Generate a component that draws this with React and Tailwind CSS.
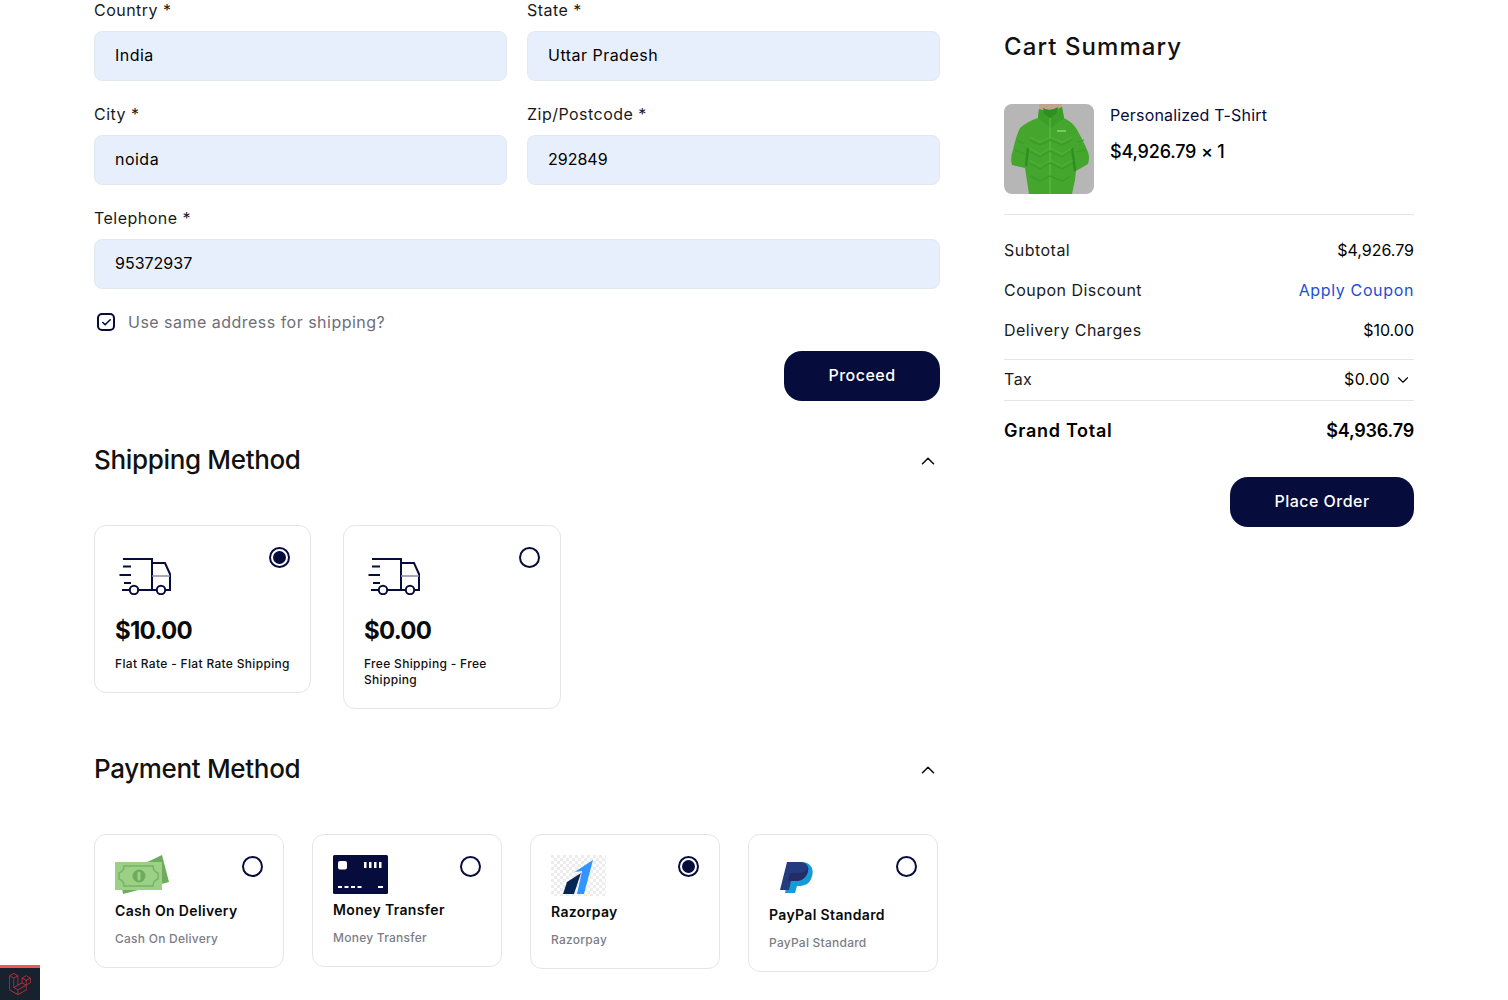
import React from 'react';
import { Check, ChevronDown, ChevronUp } from 'lucide-react';
import { FaLaravel } from 'react-icons/fa';

const Field = ({ label, value, className = '', numeric = false }) => (
  <div className={className}>
    <label className="block text-base leading-5 mb-[11px] text-[#1a1a1a]">{label} *</label>
    <input
      readOnly
      value={value}
      className={`w-full h-[50px] px-5 pb-[2px] rounded-lg border border-[#e2e8f0] bg-[#e8effc] text-base text-black outline-none ${numeric ? 'tracking-normal' : ''}`}
    />
  </div>
);

const Radio = ({ checked }) => (
  <span className="absolute top-[21px] right-[20px] w-[21px] h-[21px] rounded-full border-2 border-[#060c3b] flex items-center justify-center bg-white">
    {checked && <span className="w-[13px] h-[13px] rounded-full bg-[#060c3b]" />}
  </span>
);

const TruckIcon = () => (
  <svg width="54" height="38" viewBox="0 0 54 38" fill="none" stroke="#060c3b" strokeWidth="2" className="ml-[3px]">
    <path d="M5 2H34V33" />
    <path d="M34 6H47L52 17V33H47.5" />
    <path d="M34 19H52" stroke="#8a8ca3" strokeWidth="1.5" />
    <path d="M20.5 33H38.5" />
    <circle cx="16" cy="33" r="4.2" />
    <circle cx="43" cy="33" r="4.2" />
    <path d="M5 9.5H13M1.5 18H13M6 26H13M4 33H11" />
  </svg>
);

const CashIcon = () => (
  <svg width="55" height="40" viewBox="0 0 55 40">
    <path d="M47 0L54 27L8 39L5 20Z" fill="#6fab5c" />
    <rect x="0" y="7" width="47" height="28" fill="#9bd086" />
    <path d="M9 11H38C38 15 40 17 43 18V24C40 25 38 27 38 31H9C9 27 7 25 4 24V18C7 17 9 15 9 11Z" fill="none" stroke="#79b366" strokeWidth="1.5" />
    <circle cx="24" cy="21" r="6.5" fill="#6fab5c" />
    <rect x="22.5" y="16.5" width="3" height="9" rx="1.5" fill="#9bd086" />
  </svg>
);

const CardIcon = () => (
  <svg width="55" height="39" viewBox="0 0 55 39">
    <rect width="55" height="39" rx="1.5" fill="#060c3b" />
    <rect x="5" y="6" width="9" height="8.5" rx="2" fill="#fff" />
    <path d="M31 7h2.5v6H31zM36 7h2.5v6H36zM41 7h2.5v6H41zM46 7h2.5v6H46z" fill="#fff" />
    <path d="M5 31h4v2H5zM11.5 31h4v2h-4zM18 31h4v2h-4zM24.500 31h4v2h-4zM45 31h5v2h-5z" fill="#fff" />
  </svg>
);

const RazorpayIcon = () => (
  <svg width="55" height="41" viewBox="0 0 55 41">
    <defs>
      <pattern id="checker" width="6" height="6" patternUnits="userSpaceOnUse">
        <rect width="6" height="6" fill="#fff" />
        <rect width="3" height="3" fill="#ececec" />
        <rect x="3" y="3" width="3" height="3" fill="#ececec" />
      </pattern>
    </defs>
    <rect width="55" height="41" fill="url(#checker)" />
    <path d="M12 39L16 27L30 18L23 39Z" fill="#072654" />
    <path d="M42 5L23.500 17L31 16L26 39L33 39Z" fill="#3395ff" />
  </svg>
);

const PaypalIcon = () => (
  <svg width="55" height="44" viewBox="0 0 55 44">
    <path d="M19 19L27 7H33C37 7 41 9 43 13C44 16 44 20 42 24C40 29 35 31 30 31H28L26 38H16L17 33Z" fill="#179bd7" />
    <path d="M18 7H31C37 7 40 11 39 15C38 22 33 26 26 26H22L20 35H11Z" fill="#253b80" />
    <path d="M21 18H30C34 18 38 16 39 12C40 16 38 21 34 24C31 26 28 26 26 26H19Z" fill="#222d65" />
  </svg>
);

const JacketImage = () => (
  <svg width="90" height="90" viewBox="0 0 90 90" className="rounded-lg shrink-0">
    <defs>
      <filter id="soft">
        <feGaussianBlur stdDeviation="0.5" />
      </filter>
    </defs>
    <rect width="90" height="90" fill="#b6b6b6" />
    <g filter="url(#soft)">
      <path d="M35 0H58V6H35Z" fill="#c4a48f" />
      <path d="M34 86H60V92H34Z" fill="#1f2a1c" />
      <path
        d="M35 5Q46 9 58 3L60 14Q68 18 72 24Q78 34 84 48Q86 54 84 60L72 67L71 76L68 90H25L21 64L8 61Q6 54 9 46Q12 32 16 24Q24 17 34 14Z"
        fill="#44a62f"
      />
      <path d="M35 5Q46 11 58 3L60 14L47 24L34 14Z" fill="#3b9e28" />
      <path d="M39 4Q46 8 54 3L52 10L46 14L40 10Z" fill="#2f8f20" />
      <path d="M22 62L24 44M71 67L68 44" stroke="#2f8f20" strokeWidth="2.5" fill="none" />
      <path d="M46 14V90" stroke="#69c454" strokeWidth="0.8" />
      <path
        d="M26 36L36 41L46 36L58 41L68 36M25 47L36 53L46 47L58 53L68 47M25 59L36 65L46 59L58 65L69 59M26 72L36 77L46 72L58 77L67 72"
        stroke="#3b9c28"
        strokeWidth="1.4"
        fill="none"
      />
      <path d="M26 33L36 38L46 33L58 38L68 33M25 44L36 50L46 44L58 50L68 44M25 56L36 62L46 56L58 62L69 56" stroke="#54b53f" strokeWidth="0.8" fill="none" />
      <path d="M13 36L20 40M11 46L21 50M73 38L80 36M72 48L82 46" stroke="#3b9c28" strokeWidth="1.2" fill="none" />
      <path d="M53 27H62" stroke="#b5e6a8" strokeWidth="1" />
    </g>
  </svg>
);

const shippingMethods = [
  { price: '$10.00', name: 'Flat Rate - Flat Rate Shipping', checked: true },
  { price: '$0.00', name: 'Free Shipping - Free Shipping', checked: false },
];

const paymentMethods = [
  { name: 'Cash On Delivery', icon: <CashIcon />, h: 'h-[40px]', checked: false },
  { name: 'Money Transfer', icon: <CardIcon />, h: 'h-[39px]', checked: false },
  { name: 'Razorpay', icon: <RazorpayIcon />, h: 'h-[41px]', checked: true },
  { name: 'PayPal Standard', icon: <PaypalIcon />, h: 'h-[44px]', checked: false },
];

const SectionHeader = ({ title }) => (
  <div className="flex items-center justify-between">
    <h2 className="text-[26px] leading-[38px] font-medium text-[#111] tracking-[-0.013em]">{title}</h2>
    <ChevronUp size={22} strokeWidth={1.75} className="mt-[2px] mr-[1px] text-[#111]" />
  </div>
);

const SummaryRow = ({ label, children }) => (
  <div className="flex items-center justify-between text-base h-10">
    <span className="text-[#1a1a1a]">{label}</span>
    {children}
  </div>
);

export default function App() {
  return (
    <div className="relative h-[1000px] overflow-hidden bg-white text-black [font-family:Inter,sans-serif] tracking-[0.03em]">
      <div className="flex gap-16 px-[94px]">
        {/* checkout form */}
        <div className="w-[846px] shrink-0">
          <div className="grid grid-cols-2 gap-x-5 gap-y-[23px]">
            <Field label="Country" value="India" />
            <Field label="State" value="Uttar Pradesh" />
            <Field label="City" value="noida" />
            <Field label="Zip/Postcode" value="292849" numeric />
            <Field label="Telephone" value="95372937" numeric className="col-span-2" />
          </div>

          <div className="flex items-center gap-[13px] mt-[23px] ml-[3px] h-[20px]">
            <span className="w-[18px] h-[18px] rounded-[5px] border-2 border-[#060c3b] flex items-center justify-center">
              <Check size={11} strokeWidth={3.5} className="text-[#060c3b]" />
            </span>
            <span className="text-base text-[#6e6e78]">Use same address for shipping?</span>
          </div>

          <div className="flex justify-end mt-[19px]">
            <button className="w-[156px] h-[50px] pb-[2px] rounded-[18px] bg-[#060c3b] text-white text-base font-medium">Proceed</button>
          </div>

          <div className="mt-[40px]">
            <SectionHeader title="Shipping Method" />
          </div>

          <div className="flex items-start gap-8 mt-[46px]">
            {shippingMethods.map((m, i) => (
              <div key={m.price} className={`relative border border-[#e5e5e5] rounded-xl p-5 ${i === 0 ? 'w-[217px]' : 'w-[218px]'}`}>
                <Radio checked={m.checked} />
                <div className="h-[69px] pt-[11px]">
                  <TruckIcon />
                </div>
                <div className="text-2xl leading-8 font-bold tracking-[-0.03em] text-[#0a0a0a]">{m.price}</div>
                <div className="mt-[9px] text-xs leading-4 font-medium tracking-[0.027em] text-[#111]">{m.name}</div>
              </div>
            ))}
          </div>

          <div className="mt-[41px]">
            <SectionHeader title="Payment Method" />
          </div>

          <div className="flex items-start gap-7 mt-[46px]">
            {paymentMethods.map((m) => (
              <div key={m.name} className="relative w-[190px] border border-[#e5e5e5] rounded-xl p-5">
                <Radio checked={m.checked} />
                <div className={m.h}>{m.icon}</div>
                <div className="mt-[6px] text-sm leading-5 font-semibold tracking-[0.025em] text-[#0a0a0a]">{m.name}</div>
                <div className="mt-[10px] text-xs leading-4 font-medium tracking-[0.02em] text-[#7d7d88]">{m.name}</div>
              </div>
            ))}
          </div>
        </div>

        {/* cart summary */}
        <div className="w-[410px] shrink-0 pt-[29px]">
          <h2 className="text-2xl leading-9 font-medium text-[#111] tracking-[0.045em]">Cart Summary</h2>

          <div className="flex gap-4 mt-[39px] pb-5 border-b border-[#e5e5e5]">
            <JacketImage />
            <div>
              <div className="text-base leading-[22px] tracking-[0.011em] text-[#060c3b]">Personalized T-Shirt</div>
              <div className="text-lg leading-7 mt-[12px] font-medium tracking-[-0.01em]">$4,926.79 × 1</div>
            </div>
          </div>

          <div className="mt-[15px]">
            <SummaryRow label="Subtotal">
              <span className="tracking-normal">$4,926.79</span>
            </SummaryRow>
            <SummaryRow label="Coupon Discount">
              <span className="text-[#1d4ed8] tracking-[0.04em]">Apply Coupon</span>
            </SummaryRow>
            <SummaryRow label="Delivery Charges">
              <span className="tracking-normal">$10.00</span>
            </SummaryRow>
          </div>

          <div className="flex items-center justify-between h-[42px] pb-[2px] mt-[9px] border-y border-[#e5e5e5] text-base">
            <span className="text-[#1a1a1a]">Tax</span>
            <span className="flex items-center gap-[4px] tracking-[0.02em]">
              $0.00
              <ChevronDown size={18} strokeWidth={1.5} className="mt-[2px] mr-[2px]" />
            </span>
          </div>

          <div className="flex items-center justify-between mt-[16px] text-lg leading-7 font-semibold">
            <span className="tracking-[0.04em]">Grand Total</span>
            <span className="tracking-[-0.012em]">$4,936.79</span>
          </div>

          <div className="flex justify-end mt-[32px]">
            <button className="w-[184px] h-[50px] pb-[2px] rounded-[18px] bg-[#060c3b] text-white text-base font-medium">Place Order</button>
          </div>
        </div>
      </div>

      {/* debug bar tab */}
      <div className="fixed left-0 bottom-0 w-10 h-[35px] bg-[#18212e] border-t-[3px] border-[#f4545c] flex items-center justify-center">
        <FaLaravel size={22} className="text-[#c8343c]" />
      </div>
    </div>
  );
}
